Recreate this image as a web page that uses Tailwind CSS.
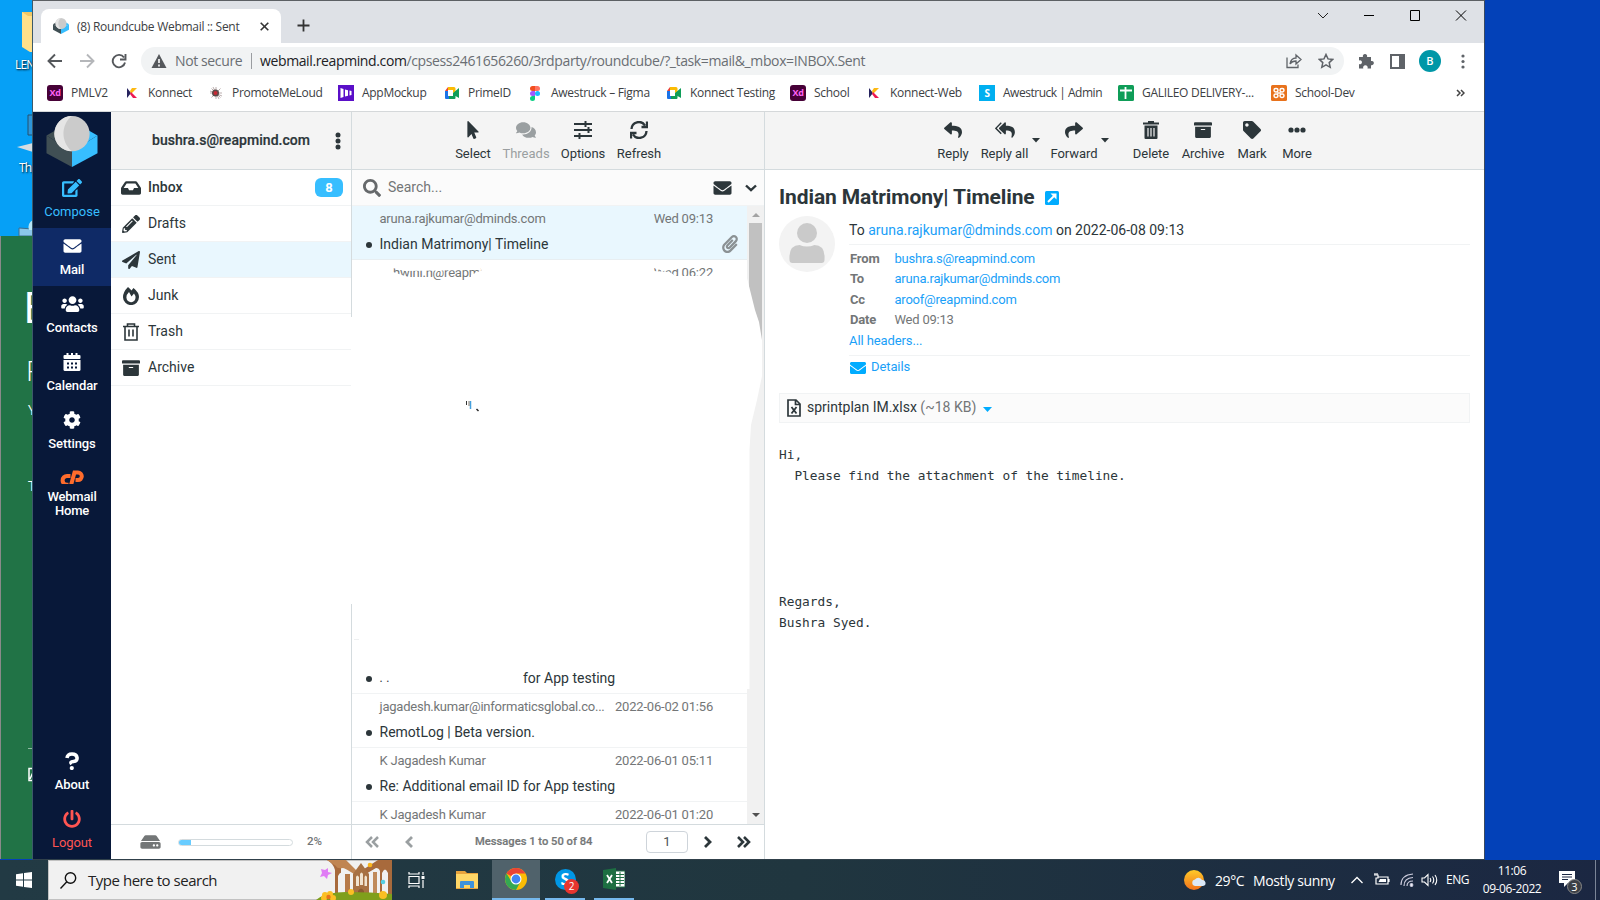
<!DOCTYPE html>
<html lang="en">
<head>
<meta charset="utf-8">
<title>Roundcube Webmail :: Sent</title>
<script src="https://cdn.jsdelivr.net/npm/@tailwindcss/browser@4"></script>
</head>
<body class="w-[1600px] h-[900px] overflow-hidden bg-[#0341b8] font-['Open_Sans',sans-serif] relative">
<svg class="hidden">
<symbol id="reply" viewBox="0 0 512 512"><path d="M8.309 189.836L184.313 37.851C199.719 24.546 224 35.347 224 56.015v80.053c160.629 1.839 288 34.032 288 186.258 0 61.441-39.581 122.309-83.333 154.132-13.653 9.931-33.111-2.533-28.077-18.631 45.344-145.012-21.507-183.51-176.59-185.742V360c0 20.7-24.3 31.453-39.687 18.164l-176.004-152c-11.071-9.562-11.086-26.753 0-36.328z"/></symbol>
<symbol id="replyall" viewBox="0 0 576 512"><g transform="translate(112 0) scale(.9 1)"><path d="M8.309 189.836L184.313 37.851C199.719 24.546 224 35.347 224 56.015v80.053c160.629 1.839 288 34.032 288 186.258 0 61.441-39.581 122.309-83.333 154.132-13.653 9.931-33.111-2.533-28.077-18.631 45.344-145.012-21.507-183.51-176.59-185.742V360c0 20.7-24.3 31.453-39.687 18.164l-176.004-152c-11.071-9.562-11.086-26.753 0-36.328z"/></g><path d="M180 50L24 208l156 158" fill="none" stroke="currentColor" stroke-width="42"/></symbol>
<symbol id="pointer" viewBox="0 0 320 512"><path d="M302.189 329.126H196.105l55.831 135.993c3.889 9.428-.555 19.999-9.444 23.999l-49.165 21.427c-9.165 4-19.443-.571-23.332-9.714l-53.053-129.136-86.664 89.138C18.729 472.71 0 463.554 0 447.977V18.299C0 1.899 19.921-6.096 30.277 5.443l284.412 292.542c11.472 11.179 3.007 31.141-12.5 31.141z"/></symbol>
<symbol id="envelope" viewBox="0 0 512 512"><path d="M502.3 190.8c3.9-3.1 9.7-.2 9.7 4.7V400c0 26.5-21.5 48-48 48H48c-26.5 0-48-21.5-48-48V195.6c0-5 5.7-7.8 9.7-4.7 22.4 17.4 52.1 39.5 154.1 113.6 21.1 15.4 56.7 47.8 92.2 47.6 35.7.3 72-32.8 92.3-47.6 102-74.1 131.6-96.3 154-113.7zM256 320c23.2.4 56.6-29.2 73.4-41.4 132.7-96.3 142.8-104.7 173.4-128.7 5.8-4.5 9.2-11.5 9.2-18.9v-19c0-26.5-21.5-48-48-48H48c-26.5 0-48 21.5-48 48v19c0 7.4 3.4 14.3 9.2 18.9 30.6 23.9 40.7 32.4 173.4 128.7 16.8 12.2 50.2 41.8 73.4 41.4z"/></symbol>
<symbol id="tag" viewBox="0 0 512 512"><path d="M0 252.118V48C0 21.49 21.49 0 48 0h204.118a48 48 0 0 1 33.941 14.059l211.882 211.882c18.745 18.745 18.745 49.137 0 67.882L293.823 497.941c-18.745 18.745-49.137 18.745-67.882 0L14.059 286.059A48 48 0 0 1 0 252.118zM112 64c-26.51 0-48 21.49-48 48s21.49 48 48 48 48-21.49 48-48-21.49-48-48-48z"/></symbol>
<symbol id="archive" viewBox="0 0 512 512"><path d="M32 448c0 17.7 14.3 32 32 32h384c17.7 0 32-14.3 32-32V160H32v288zm160-212c0-6.6 5.4-12 12-12h104c6.6 0 12 5.4 12 12v8c0 6.6-5.4 12-12 12H204c-6.6 0-12-5.4-12-12v-8zM480 32H32C14.3 32 0 46.3 0 64v48c0 8.800 7.200 16 16 16h480c8.800 0 16-7.200 16-16V64c0-17.700-14.300-32-32-32z"/></symbol>
<symbol id="search" viewBox="0 0 512 512"><path d="M505 442.7L405.3 343c-4.5-4.5-10.6-7-17-7H372c27.6-35.3 44-79.7 44-128C416 93.1 322.9 0 208 0S0 93.1 0 208s93.1 208 208 208c48.3 0 92.7-16.4 128-44v16.3c0 6.4 2.5 12.5 7 17l99.7 99.7c9.4 9.4 24.6 9.4 33.9 0l28.3-28.3c9.4-9.4 9.4-24.6.1-34zM208 336c-70.7 0-128-57.2-128-128 0-70.7 57.2-128 128-128 70.7 0 128 57.2 128 128 0 70.7-57.2 128-128 128z"/></symbol>
<symbol id="plane" viewBox="0 0 512 512"><path d="M476 3.2L12.5 270.6c-18.1 10.4-15.8 35.6 2.2 43.2L121 358.4l287.3-253.2c5.5-4.9 13.3 2.6 8.6 8.3L176 407v80.5c0 23.6 28.5 32.9 42.5 15.8L282 426l124.6 52.2c14.2 6 30.4-2.9 33-18.2l72-432C515 7.8 493.3-6.8 476 3.2z"/></symbol>
<symbol id="inbox" viewBox="0 0 576 512"><path d="M567.938 243.908L462.25 85.374A48.003 48.003 0 0 0 422.311 64H153.689a48 48 0 0 0-39.938 21.374L8.062 243.908A47.994 47.994 0 0 0 0 270.533V400c0 26.51 21.49 48 48 48h480c26.51 0 48-21.49 48-48V270.533a47.994 47.994 0 0 0-8.062-26.625zM162.252 128h251.497l85.333 128H376l-32 64H232l-32-64H76.918l85.334-128z"/></symbol>
<symbol id="pencil" viewBox="0 0 512 512"><path d="M497.9 142.1l-46.1 46.1c-4.7 4.7-12.3 4.7-17 0l-111-111c-4.7-4.7-4.7-12.3 0-17l46.1-46.1c18.7-18.7 49.1-18.7 67.9 0l60.1 60.1c18.8 18.7 18.8 49.1 0 67.9zM284.2 99.8L21.6 362.4.4 483.9c-2.9 16.4 11.4 30.6 27.8 27.8l121.5-21.3 262.6-262.6c4.7-4.7 4.7-12.3 0-17l-111-111c-4.8-4.7-12.4-4.7-17.1 0zM124.1 339.9c-5.5-5.5-5.5-14.3 0-19.8l154-154c5.5-5.5 14.3-5.5 19.8 0s5.5 14.3 0 19.8l-154 154c-5.5 5.5-14.3 5.5-19.8 0zM88 424h48v36.3l-64.5 11.3-31.1-31.1L51.7 376H88v48z"/></symbol>
<symbol id="edit" viewBox="0 0 576 512"><path d="M402.6 83.2l90.2 90.2c3.8 3.8 3.8 10 0 13.8L274.4 405.6l-92.8 10.3c-12.4 1.4-22.9-9.1-21.5-21.5l10.3-92.8L388.8 83.2c3.8-3.8 10-3.8 13.8 0zm162-22.900l-48.800-48.800c-15.200-15.200-39.900-15.200-55.200 0l-35.400 35.400c-3.800 3.800-3.800 10 0 13.800l90.200 90.200c3.800 3.800 10 3.800 13.800 0l35.400-35.400c15.200-15.300 15.200-40 0-55.200zM384 346.200V448H64V128h229.800c3.200 0 6.200-1.300 8.500-3.500l40-40c7.600-7.600 2.200-20.500-8.500-20.500H48C21.500 64 0 85.500 0 112v352c0 26.500 21.500 48 48 48h352c26.500 0 48-21.500 48-48V306.200c0-10.700-12.900-16-20.500-8.500l-40 40c-2.200 2.300-3.500 5.300-3.500 8.500z"/></symbol>
<symbol id="users" viewBox="0 0 640 512"><path d="M96 224c35.3 0 64-28.7 64-64s-28.7-64-64-64-64 28.7-64 64 28.7 64 64 64zm448 0c35.3 0 64-28.7 64-64s-28.7-64-64-64-64 28.7-64 64 28.7 64 64 64zm32 32h-64c-17.6 0-33.5 7.1-45.1 18.6 40.3 22.1 68.9 62 75.1 109.4h66c17.7 0 32-14.3 32-32v-32c0-35.3-28.7-64-64-64zm-256 0c61.9 0 112-50.1 112-112S381.9 32 320 32 208 82.1 208 144s50.1 112 112 112zm76.8 32h-8.3c-20.8 10-43.9 16-68.5 16s-47.6-6-68.5-16h-8.3C179.6 288 128 339.6 128 403.2V432c0 26.5 21.5 48 48 48h288c26.5 0 48-21.5 48-48v-28.800c0-63.600-51.600-115.200-115.200-115.200zm-223.700-13.400C161.500 263.100 145.600 256 128 256H64c-35.300 0-64 28.700-64 64v32c0 17.700 14.300 32 32 32h65.900c6.300-47.400 34.900-87.300 75.200-109.400z"/></symbol>
<symbol id="cog" viewBox="0 0 512 512"><path d="M487.4 315.7l-42.6-24.6c4.3-23.2 4.3-47 0-70.2l42.6-24.6c4.9-2.8 7.1-8.6 5.5-14-11.1-35.6-30-67.8-54.7-94.6-3.8-4.1-10-5.1-14.8-2.3L380.8 110c-17.900-15.400-38.500-27.300-60.800-35.100V25.800c0-5.600-3.900-10.500-9.400-11.700-36.700-8.200-74.300-7.800-109.200 0-5.500 1.200-9.400 6.100-9.400 11.700V75c-22.200 7.900-42.800 19.800-60.800 35.100L88.700 85.500c-4.900-2.800-11-1.900-14.800 2.300-24.700 26.700-43.600 58.900-54.700 94.600-1.700 5.400.6 11.200 5.500 14L67.300 221c-4.300 23.200-4.300 47 0 70.200l-42.600 24.600c-4.900 2.800-7.100 8.600-5.500 14 11.100 35.600 30 67.800 54.700 94.600 3.800 4.100 10 5.100 14.800 2.300l42.600-24.600c17.900 15.400 38.500 27.300 60.800 35.100v49.200c0 5.600 3.900 10.500 9.400 11.700 36.700 8.200 74.300 7.800 109.200 0 5.500-1.200 9.400-6.100 9.400-11.700v-49.200c22.200-7.900 42.800-19.800 60.800-35.100l42.600 24.600c4.900 2.800 11 1.900 14.800-2.300 24.700-26.700 43.600-58.900 54.700-94.600 1.500-5.500-.7-11.300-5.600-14.100zM256 336c-44.100 0-80-35.900-80-80s35.900-80 80-80 80 35.900 80 80-35.900 80-80 80z"/></symbol>
<symbol id="power" viewBox="0 0 512 512"><path d="M400 54.100c63 45 104 118.600 104 201.900 0 136.800-110.800 247.700-247.500 248C120 504.300 8.200 393 8 256.400 7.900 173.100 48.900 99.300 111.800 54.200c11.700-8.300 28-4.800 35 7.700L162.600 90c5.900 10.500 3.100 23.800-6.600 31-41.500 30.800-68 79.600-68 134.900-.1 92.300 74.500 168.100 168 168.100 91.600 0 168.600-74.200 168-169.100-.3-51.800-24.700-101.800-68.100-134-9.700-7.200-12.400-20.500-6.500-30.900l15.800-28.100c7-12.400 23.200-16.100 34.800-7.800zM296 264V24c0-13.300-10.700-24-24-24h-32c-13.300 0-24 10.700-24 24v240c0 13.300 10.700 24 24 24h32c13.300 0 24-10.700 24-24z"/></symbol>
<symbol id="clip" viewBox="0 0 448 512"><path d="M43.246 466.142c-58.43-60.289-57.341-157.511 1.386-217.581L254.392 34c44.316-45.332 116.351-45.336 160.671 0 43.89 44.894 43.943 117.329 0 162.276L232.214 383.128c-29.855 30.537-78.633 30.111-107.982-.998-28.275-29.97-27.368-77.473 1.452-106.953l143.743-146.835c6.182-6.314 16.312-6.422 22.626-.241l22.861 22.379c6.315 6.182 6.422 16.312.241 22.626L171.427 319.927c-4.932 5.045-5.236 13.428-.648 18.292 4.372 4.634 11.245 4.711 15.688.165l182.849-186.851c19.613-20.062 19.613-52.725-.011-72.798-19.189-19.627-49.957-19.637-69.154 0L90.39 293.295c-34.763 35.56-35.299 93.12-1.191 128.313 34.01 35.093 88.985 35.137 123.058.286l172.06-175.999c6.177-6.319 16.307-6.433 22.626-.256l22.877 22.364c6.319 6.177 6.434 16.307.256 22.626l-172.06 175.998c-59.576 60.938-155.943 60.216-214.77-.485z"/></symbol>
<symbol id="comments" viewBox="0 0 576 512"><path d="M416 192c0-88.4-93.1-160-208-160S0 103.6 0 192c0 34.3 14.1 65.9 38 92-13.4 30.2-35.5 54.2-35.8 54.5-2.200 2.300-2.800 5.700-1.500 8.700S4.800 352 8 352c36.600 0 66.900-12.300 88.700-25 32.200 15.700 70.300 25 111.300 25 114.900 0 208-71.600 208-160zm122 220c23.900-26 38-57.700 38-92 0-66.900-53.500-124.200-129.300-148.100.9 6.600 1.300 13.300 1.300 20.100 0 105.900-107.700 192-240 192-10.800 0-21.300-.8-31.700-1.900C207.800 439.600 281.800 480 368 480c41 0 79.100-9.200 111.300-25 21.800 12.700 52.100 25 88.700 25 3.200 0 6.100-1.900 7.300-4.800 1.300-2.900.7-6.300-1.500-8.700-.3-.3-22.400-24.200-35.800-54.500z"/></symbol>
<symbol id="hdd" viewBox="0 0 576 512"><path d="M576 304v96c0 26.51-21.49 48-48 48H48c-26.51 0-48-21.49-48-48v-96c0-26.51 21.49-48 48-48h480c26.51 0 48 21.49 48 48zm-48-80a79.557 79.557 0 0 1 30.777 6.165L462.25 85.374A48.003 48.003 0 0 0 422.311 64H153.689a48 48 0 0 0-39.938 21.374L17.223 230.165A79.557 79.557 0 0 1 48 224h480zm-48 96c-17.673 0-32 14.327-32 32s14.327 32 32 32 32-14.327 32-32-14.327-32-32-32zm-96 0c-17.673 0-32 14.327-32 32s14.327 32 32 32 32-14.327 32-32-14.327-32-32-32z"/></symbol>
<symbol id="cube" viewBox="0 0 52 52"><path d="M0 20L26 36V52L0 38z" fill="#404f54"/><path d="M52 20L26 36V52L52 38z" fill="#37beff"/><path d="M0 20L12 13 26 36z" fill="#404f54"/><path d="M40 13L52 20 26 36z" fill="#37beff"/><circle cx="26" cy="18" r="18" fill="#cbcbcb"/><path d="M26 0A18 18 0 0 0 26 36C14 26 15 8 26 0z" fill="#e5e5e5"/></symbol>
<symbol id="konnect" viewBox="0 0 16 16"><path d="M3 3l4 5-4 5z" fill="#26235e"/><path d="M8 3h5L7 9 6 6z" fill="#fdb913"/><path d="M7 7l6 6H9L6 9z" fill="#ed1651"/></symbol>
<symbol id="meet" viewBox="0 0 16 16"><path d="M1 6h3v5h6v3H2a1 1 0 0 1-1-1z" fill="#1a73e8"/><path d="M4 2v4H1z" fill="#ea4335"/><path d="M4 2h6a1.500 1.500 0 0 1 1.500 1.500V7L9 8V5H4z" fill="#fbbc04"/><path d="M9 8l6-5v10l-3.500-2v2a1 1 0 0 1-1 1H5v-3h4z" fill="#0f9d58"/></symbol>
</svg>

<!-- desktop behind the browser -->
<div class="absolute left-0 top-0 w-[33px] h-[236px] bg-[#06a0f6] overflow-hidden text-white text-[12px] leading-4">
  <svg class="absolute inset-0" width="33" height="236"><path d="M22 12h11v40h-3l-8-5z" fill="#ffe08a"/><path d="M22 12h10v4h-4z" fill="#f0c766"/><path d="M33 115h-5v20h5" fill="#2e95d8" stroke="#24506e"/><path d="M17 147l16-4v9z" fill="#d6dde2"/><path d="M33 229l-14-1v8h14z" fill="#8ac8ea" stroke="#3d6f90"/><path d="M33 220q-6 3-4 10h4z" fill="#b6e4f5"/></svg>
  <span class="absolute left-[15px] top-[57px] tracking-[-0.8px] [text-shadow:1px_1px_2px_#000]">LEN</span>
  <span class="absolute left-[19px] top-[160px] tracking-[-0.8px] [text-shadow:1px_1px_2px_#000]">Thi</span>
</div>
<div class="absolute left-0 top-[236px] w-[33px] h-[623px] bg-[#217346] border-l border-[#8a8a8a] overflow-hidden text-white">
  <span class="absolute left-[22px] top-[44px] text-[44px] leading-[52px]">E</span>
  <span class="absolute left-[25px] top-[116px] text-[28px] leading-[36px] font-light">F</span>
  <span class="absolute left-[27px] top-[164px] text-[14px] leading-[20px]">Y</span>
  <span class="absolute left-[27px] top-[240px] text-[14px] leading-[20px]">T</span>
  <svg class="absolute left-[26px] top-[510px]" width="8" height="36"><path d="M1 2.500h7" stroke="#8fb9a2"/><path d="M8 22.500H2v12h6M3 33l4-9" fill="none" stroke="#fff" stroke-width="1.500"/></svg>
</div>

<!-- browser window -->
<div class="absolute left-[32px] top-0 w-[1453px] h-[860px] flex flex-col bg-white border border-t-[#5c6064] border-l-[#3c5a6a] border-r-[#3a4a60] border-b-[#30404a] text-[#3c4043] overflow-hidden">
  <div class="h-[42px] bg-[#dee1e6] flex items-end shrink-0">
    <div class="ml-2 w-60 h-[34px] bg-white rounded-t-lg flex items-center pl-[12px] text-[12px]">
      <svg width="16" height="16"><use href="#cube"/></svg>
      <span class="ml-2 w-[163px] whitespace-nowrap tracking-[-0.28px] text-[#3c4043] pt-px">(8) Roundcube Webmail :: Sent</span>
      <svg class="ml-[20px]" width="9" height="9"><path d="M.7.7l7.600 7.600M8.300.7L.7 8.300" stroke="#333" stroke-width="1.600"/></svg>
    </div>
    <svg class="ml-4 mb-[11px]" width="13" height="13"><path d="M6.500.5v12M.5 6.500h12" stroke="#333" stroke-width="1.800"/></svg>
    <div class="flex-1 self-stretch flex justify-end items-start pt-[8px] pr-[17px] gap-[34px]">
      <svg width="12" height="13"><path d="M1 4l5 5 5-5" fill="none" stroke="#222"/></svg>
      <svg width="12" height="13"><path d="M1 6.500h10" stroke="#000"/></svg>
      <svg width="12" height="13"><path d="M1.500 1.500h9v10h-9z" fill="none" stroke="#000"/></svg>
      <svg width="12" height="13"><path d="M1 1.500l10 10M11 1.500l-10 10" stroke="#000"/></svg>
    </div>
  </div>
  <div class="h-9 flex items-center shrink-0 pl-[14px] text-[14px]">
    <svg class="w-[82px] h-4 shrink-0" fill="none" stroke-width="1.900"><path d="M15 8H2M8 1.500L1.500 8 8 14.500" stroke="#55585c"/><path d="M33 8h13M40 1.500L46.500 8 40 14.500" stroke="#b5b7ba"/><path d="M77 4.500A6.200 6.200 0 1 0 78 9.500M78.500 1v5.500h-5.500" stroke="#55585c"/></svg>
    <div class="ml-[12px] w-[1203px] h-7 rounded-full bg-[#f1f3f4] flex items-center pl-[10px] pr-[10px] pb-px whitespace-nowrap">
      <svg width="16" height="14"><path d="M8 0l7.500 14H.5z" fill="#55585c"/><path d="M8 5v4M8 10.500v2" stroke="#fff" stroke-width="1.600"/></svg>
      <span class="ml-2 w-[68px] text-[#6a6e73] tracking-[-0.38px]">Not secure</span>
      <span class="w-px h-4 bg-[#9a9da1] mx-2"></span>
      <span class="text-[#6a6e73] tracking-[-0.38px]"><span class="text-[#202124]">webmail.reapmind.com</span>/cpsess2461656260/3rdparty/roundcube/?_task=mail&amp;_mbox=INBOX.Sent</span>
      <span class="flex-1"></span>
      <svg width="16" height="16" fill="none" stroke="#5f6368" stroke-width="1.300"><path d="M1 4.500v10h11v-3M4 11q1-6 6-6V2l5 4.500L10 11V8q-4 0-6 3z"/></svg>
      <svg class="ml-4" width="16" height="16" fill="none" stroke="#5f6368" stroke-width="1.500"><path d="M8 1.500l2 4.400 4.700.5-3.500 3.200 1 4.700L8 11.900l-4.200 2.400 1-4.700L1.300 6.400 6 5.900z"/></svg>
    </div>
    <svg class="ml-[14px]" width="16" height="16" fill="#5f6368"><path d="M1 4h4a2.200 2.200 0 1 1 4 0h4v4a2.200 2.200 0 1 1 0 4.200V15.500H9.500a2.300 2.300 0 1 0-4.200 0H1V11a2 2 0 1 0 0-3.500z"/></svg>
    <svg class="ml-4" width="15" height="15"><path d="M1 1h13v13H1z" fill="none" stroke="#5f6368" stroke-width="2"/><path d="M9 1h5v13H9z" fill="#5f6368"/></svg>
    <span class="ml-[14px] size-[22px] rounded-full bg-[#0097a7] text-white text-[11px] font-semibold flex items-center justify-center">B</span>
    <svg class="ml-5" width="4" height="15" fill="#5f6368"><circle cx="2" cy="2" r="1.600"/><circle cx="2" cy="7.500" r="1.600"/><circle cx="2" cy="13" r="1.600"/></svg>
  </div>
  <div class="h-[33px] border-b border-[#d5d8da] flex items-center pl-[14px] text-[12px] tracking-[-0.29px] whitespace-nowrap shrink-0 pb-[4px] box-border">
    <div class="w-[77px] flex items-center gap-2"><span class="size-4 rounded-[3px] bg-[#470137] text-[#ff61f6] text-[9px] font-bold flex items-center justify-center">Xd</span>PMLV2</div>
    <div class="w-[84px] flex items-center gap-2"><svg width="16" height="16"><use href="#konnect"/></svg>Konnect</div>
    <div class="w-[130px] flex items-center gap-2"><svg width="16" height="16"><path d="M8 2v12M2 8h12M3.500 3.500l9 9M12.500 3.500l-9 9M5 2l6 12M2 6l12 5" stroke="#a99" stroke-width=".8"/><circle cx="7.500" cy="8" r="3.500" fill="#5a4a4a"/><circle cx="7.500" cy="8" r="2" fill="#c62a35"/></svg>PromoteMeLoud</div>
    <div class="w-[106px] flex items-center gap-2"><svg width="16" height="16"><path d="M0 0h16v16H0z" fill="#5a0fc8"/><path d="M2.500 3l3 1v8l-3 1zM7 4.500l3 .7v5.600l-3 .7zM11.500 5.500l2 .5v4l-2 .5z" fill="#fff"/></svg>AppMockup</div>
    <div class="w-[83px] flex items-center gap-2"><svg width="16" height="16"><use href="#meet"/></svg>PrimeID</div>
    <div class="w-[139px] flex items-center gap-2"><svg width="16" height="16"><path d="M5.500 1H8v5H5.500a2.500 2.500 0 0 1 0-5z" fill="#f24e1e"/><path d="M8 1h2.500a2.500 2.500 0 0 1 0 5H8z" fill="#ff7262"/><path d="M5.500 6H8v5H5.500a2.500 2.500 0 0 1 0-5z" fill="#a259ff"/><circle cx="10.500" cy="8.500" r="2.500" fill="#1abcfe"/><path d="M5.500 11H8v2.500A2.500 2.500 0 1 1 5.500 11z" fill="#0acf83"/></svg>Awestruck – Figma</div>
    <div class="w-[124px] flex items-center gap-2"><svg width="16" height="16"><use href="#meet"/></svg>Konnect Testing</div>
    <div class="w-[76px] flex items-center gap-2"><span class="size-4 rounded-[3px] bg-[#470137] text-[#ff61f6] text-[9px] font-bold flex items-center justify-center">Xd</span>School</div>
    <div class="w-[113px] flex items-center gap-2"><svg width="16" height="16"><use href="#konnect"/></svg>Konnect-Web</div>
    <div class="w-[139px] flex items-center gap-2 tracking-[-0.48px]"><span class="size-4 bg-[#00aff0] text-white text-[10px] font-bold flex items-center justify-center">S</span>Awestruck | Admin</div>
    <div class="w-[153px] flex items-center gap-2"><svg width="16" height="16"><rect width="16" height="16" rx="1.500" fill="#0f9d58"/><path d="M2 5.500h12M7.500 2v12" stroke="#fff" stroke-width="1.800"/></svg>GALILEO DELIVERY-...</div>
    <div class="w-[185px] flex items-center gap-2"><svg width="16" height="16"><rect width="16" height="16" rx="1.500" fill="#e8721c"/><g fill="none" stroke="#fff" stroke-width="1.500"><rect x="3" y="3.500" width="4" height="3.500" rx="1.700"/><rect x="9" y="3.500" width="4" height="3.500" rx="1.700"/><rect x="3" y="9" width="4" height="3.500" rx="1.700"/><rect x="9" y="9" width="4" height="3.500" rx="1.700"/><path d="M6 8h4"/></g></svg>School-Dev</div>
    <svg width="9" height="8" fill="none" stroke="#444" stroke-width="1.500"><path d="M1 1l3 3-3 3M5 1l3 3-3 3"/></svg>
  </div>

  <!-- webmail -->
  <div class="flex-1 flex min-h-0 font-[Roboto,sans-serif] text-[14px] text-[#2c363a] fill-[#2c363a]">
    <nav class="w-[78px] bg-[#081839] flex flex-col text-white text-[13px] font-medium text-center shrink-0 leading-[14px] tracking-[-0.1px]">
      <div class="h-[58px] flex justify-center pt-[4px]"><svg width="52" height="51"><use href="#cube"/></svg></div>
      <div class="h-[58px] flex flex-col items-center pt-[9px] gap-[8px] text-[#37beff] font-normal"><svg width="20" height="18" fill="currentColor"><use href="#edit"/></svg><span class="tracking-[0px]">Compose</span></div>
      <div class="h-[58px] flex flex-col items-center pt-[9px] gap-[8px] bg-[#0f2a66]"><svg width="19" height="18" fill="currentColor"><use href="#envelope"/></svg>Mail</div>
      <div class="h-[58px] flex flex-col items-center pt-[9px] gap-[8px]"><svg width="23" height="18" fill="currentColor"><use href="#users"/></svg>Contacts</div>
      <div class="h-[58px] flex flex-col items-center pt-[9px] gap-[8px]"><svg width="18" height="18"><path d="M3.500 0h2v3h-2zM12.500 0h2v3h-2zM8 0h2v3H8z" fill="#fff"/><rect x=".5" y="2" width="17" height="4" rx="1" fill="#fff"/><path d="M.5 7h17v9.500a1.500 1.500 0 0 1-1.500 1.500H2A1.500 1.500 0 0 1 .5 16.500z" fill="#fff"/><path d="M4 10.500h2M8 10.500h2M12 10.500h2M4 14.500h2M8 14.500h2M12 14.500h2" stroke="#081839" stroke-width="1.800"/></svg>Calendar</div>
      <div class="h-[58px] flex flex-col items-center pt-[9px] gap-[8px]"><svg width="18" height="18" fill="currentColor"><use href="#cog"/></svg>Settings</div>
      <div class="h-[58px] flex flex-col items-center pt-[10px] gap-[6px]"><svg width="24" height="17" fill="none" stroke="#ff6c2c" stroke-width="4"><path d="M10.500 6H7a4 4 0 0 0 0 8.800h1.500"/><path d="M10.500 17L14.500 2.500h3.500a3.700 3.700 0 0 1 0 7.600h-2.500"/></svg><span class="w-[60px] tracking-[-0.2px]">Webmail Home</span></div>
      <div class="flex-1"></div>
      <div class="h-[58px] flex flex-col items-center pt-[8px] gap-[8px]"><svg width="16" height="18" fill="none"><path d="M3 6Q3.500 2 8 2t5 3.500T9.500 9.500 7.800 12" stroke="#fff" stroke-width="3.600"/><circle cx="7.800" cy="16" r="2.100" fill="#fff"/></svg>About</div>
      <div class="h-[57px] flex flex-col items-center pt-[8px] gap-[8px] text-[#ff5552] font-normal"><svg width="18" height="18" fill="currentColor"><use href="#power"/></svg>Logout</div>
    </nav>

    <section class="w-[240px] flex flex-col shrink-0 bg-white">
      <header class="h-[58px] bg-[#f4f4f4] border-b border-[#d4dbde] flex items-center pl-[41px] font-medium text-[14px]"><span class="w-[158px] whitespace-nowrap tracking-[0.05px] [-webkit-text-stroke:0.2px]">bushra.s@reapmind.com</span><svg class="ml-[25px]" width="6" height="18" fill="#2c363a"><circle cx="3" cy="3" r="2.500"/><circle cx="3" cy="9" r="2.500"/><circle cx="3" cy="15" r="2.500"/></svg></header>
      <ul class="flex-1">
        <li class="h-9 border-b border-[#f1f3f4] flex items-center pl-[10px] font-medium"><svg width="20" height="18"><use href="#inbox"/></svg><span class="ml-[7px] flex-1">Inbox</span><span class="mr-2 w-7 h-[19px] rounded-md bg-[#37beff] text-white text-[13px] flex items-center justify-center font-bold">8</span></li>
        <li class="h-9 border-b border-[#f1f3f4] flex items-center pl-[11px]"><svg width="18" height="18"><use href="#pencil"/></svg><span class="ml-2">Drafts</span></li>
        <li class="h-9 border-b border-[#f1f3f4] flex items-center pl-[11px] bg-[#e9f7fe]"><svg width="18" height="18"><use href="#plane"/></svg><span class="ml-2">Sent</span></li>
        <li class="h-9 border-b border-[#f1f3f4] flex items-center pl-[11px]"><svg width="18" height="18"><path fill-rule="evenodd" d="M6 0q2 1.500 3.500 3.500L11.500 1Q17 5.500 17 10a8 8 0 0 1-16 .2Q1 5 6 0zM7 5q-3 3-2.500 6a4.500 4.500 0 0 0 9-.5q0-2-1.500-4l-2.500 3z" fill="#2c363a"/></svg><span class="ml-2">Junk</span></li>
        <li class="h-9 border-b border-[#f1f3f4] flex items-center pl-[11px]"><svg width="18" height="18" fill="none" stroke="#2c363a" stroke-width="1.600"><path d="M1 3.500h16M5.500 3.500V1h7v2.500M3 3.500v13.500h12V3.500M7 6.500v7M11 6.500v7"/></svg><span class="ml-2">Trash</span></li>
        <li class="h-9 border-b border-[#f1f3f4] flex items-center pl-[11px]"><svg width="18" height="18"><use href="#archive"/></svg><span class="ml-2">Archive</span></li>
      </ul>
      <footer class="h-[35px] border-t border-[#d4dbde] flex items-center pl-[29px] text-[11.500px] font-medium text-[#737677]"><svg width="21" height="18" fill="#737677"><use href="#hdd"/></svg><div class="ml-[17px] w-[115px] h-[7px] rounded-full border border-[#d4dbde] overflow-hidden"><div class="w-[12px] h-full bg-[#68ccff]"></div></div><span class="ml-[14px]">2%</span></footer>
    </section>

    <div class="w-px bg-[#d4dbde] flex flex-col shrink-0"><div class="mt-[205px] h-[287px] bg-white"></div></div>

    <section class="w-[412px] flex flex-col shrink-0 relative">
      <header class="h-[58px] bg-[#f4f4f4] border-b border-[#d4dbde] flex pl-[93px] text-[13px] leading-4 text-center">
        <div class="w-[56px] flex flex-col items-center pt-[9px] gap-[7px]"><svg width="18" height="18"><use href="#pointer"/></svg>Select</div>
        <div class="w-[50px] flex flex-col items-center pt-[9px] gap-[7px] text-[#9a9fa1]"><svg width="20" height="18" fill="currentColor"><use href="#comments"/></svg>Threads</div>
        <div class="w-[64px] flex flex-col items-center pt-[9px] gap-[7px] tracking-[-0.1px]"><svg width="18" height="18" stroke="#2c363a" stroke-width="2"><path d="M0 3h18M0 9h18M0 15h18M11.500 0v6M14.500 6v6M5.500 12v6"/></svg>Options</div>
        <div class="w-[48px] flex flex-col items-center pt-[9px] gap-[7px]"><svg width="18" height="18" fill="none" stroke="#2c363a" stroke-width="2.300"><path d="M1.500 8A7.300 7.300 0 0 1 15 4.500M16.500 10A7.300 7.300 0 0 1 3 13.500M17 .5V6h-5.500M1 17.500V12h5.500"/></svg>Refresh</div>
      </header>
      <div class="h-9 bg-[#fbfbfb] border-b border-[#f1f3f4] flex items-center pl-[11px] text-[#737677]"><svg width="18" height="18" fill="#66696b"><use href="#search"/></svg><span class="ml-[7px] flex-1">Search...</span><svg width="19" height="18"><use href="#envelope"/></svg><svg class="ml-[13px] mr-[7px]" width="12" height="8"><path d="M1 1.500L6 6.200 11 1.500" fill="none" stroke="#2c363a" stroke-width="2.400"/></svg></div>
      <div class="flex-1 flex min-h-0 overflow-hidden">
        <div class="w-[395px]">
          <div class="h-[54px] bg-[#e9f7fe] border-b border-[#e8eef1] pl-[27.500px] pr-[9px] pt-[2px]">
            <div class="h-[21px] flex items-center justify-between pr-[25px] text-[13px] tracking-[-0.2px] text-[#737677]"><span>aruna.rajkumar@dminds.com</span><span>Wed 09:13</span></div>
            <div class="h-[30px] flex items-center relative"><i class="absolute -left-[14px] top-[13px] size-[6px] rounded-full bg-[#2c363a]"></i><span class="flex-1">Indian Matrimony| Timeline</span><svg width="16" height="18" fill="#8b9194"><use href="#clip"/></svg></div>
          </div>
          <div class="ml-[41px] h-[20px] pr-[34px] flex justify-between text-[13px] leading-5 tracking-[-0.2px] text-[#737677] pt-[3px]"><span class="h-[18px] w-[89px] whitespace-nowrap [clip-path:polygon(0_5px,12px_8px,80px_7px,86px_4px,89px_7px,78px_12px,78px_18px,30px_18px,12px_13px,0_9px)]">hwini.h@reapmi</span><span class="h-[14px] [clip-path:polygon(0_5px,10px_8px,30px_5px,60px_5px,60px_13px,22px_13px,16px_9px,0_8px)]">Wed 06:22</span></div>
        </div>
        <div class="w-[17px] bg-[#f1f1f1] flex flex-col items-center">
          <svg class="mt-[6px]" width="8" height="6"><path d="M0 5l4-4 4 4z" fill="#a3a3a3"/></svg>
          <div class="mt-[5px] w-[13px] h-[135px] bg-[#c1c1c1]"></div>
          <div class="flex-1"></div>
          <svg class="mb-[6px]" width="8" height="6"><path d="M0 1h8l-4 4z" fill="#505050"/></svg>
        </div>
      </div>
      <!-- blanked-out area and the rows below it -->
      <svg class="absolute left-0 top-[166px]" width="412" height="418"><path d="M395 0L398 12 403 32 407 44 410 62V98L405 122 399 147 397.500 172V411H395z" fill="#fff"/><path d="M114.500 123v4" stroke="#333"/><path d="M118.500 123v8" stroke="#45a0dd" stroke-width="1.500"/><path d="M117 123v5" stroke="#654" stroke-width=".8"/><path d="M124.500 131l2 2" stroke="#222" stroke-width="1.500"/><path d="M2 361.500h5" stroke="#eef0f1"/></svg>
      <div class="absolute left-0 top-[546px] w-[395px] h-[166px] overflow-hidden">
        <div class="h-[36px] border-b border-[#f1f3f4] pl-[27.500px] flex items-center relative"><i class="absolute left-[13.500px] top-[18px] size-[6px] rounded-full bg-[#2c363a]"></i><span class="w-[143.500px] pt-[5px] text-[12px] tracking-[0.3px]">. .</span><span class="pt-[5px]">for App testing</span></div>
        <div class="h-[54px] border-b border-[#f1f3f4] pl-[27.500px] pr-[34px] pt-[2px]"><div class="h-[21px] flex items-center justify-between text-[13px] tracking-[-0.2px] whitespace-nowrap text-[#737677]"><span class="tracking-[-0.23px]">jagadesh.kumar@informaticsglobal.co...</span><span>2022-06-02 01:56</span></div><div class="h-[30px] flex items-center relative"><i class="absolute -left-[14px] top-[13px] size-[6px] rounded-full bg-[#2c363a]"></i>RemotLog | Beta version.</div></div>
        <div class="h-[54px] border-b border-[#f1f3f4] pl-[27.500px] pr-[34px] pt-[2px]"><div class="h-[21px] flex items-center justify-between text-[13px] tracking-[-0.2px] text-[#737677]"><span>K Jagadesh Kumar</span><span>2022-06-01 05:11</span></div><div class="h-[30px] flex items-center relative"><i class="absolute -left-[14px] top-[13px] size-[6px] rounded-full bg-[#2c363a]"></i>Re: Additional email ID for App testing</div></div>
        <div class="pl-[27.500px] pr-[34px] pt-[2px]"><div class="h-[21px] flex items-center justify-between text-[13px] tracking-[-0.2px] text-[#737677]"><span>K Jagadesh Kumar</span><span>2022-06-01 01:20</span></div></div>
      </div>
      <footer class="h-[35px] border-t border-[#d4dbde] flex items-center pl-[13px] text-[11.200px] font-medium text-[#737677]">
        <svg width="14" height="12" fill="none" stroke="#9a9fa1" stroke-width="2.500"><path d="M7 1L2 6l5 5M13 1L8 6l5 5"/></svg>
        <svg class="ml-[26px]" width="8" height="12" fill="none" stroke="#9a9fa1" stroke-width="2.800"><path d="M7 1L2 6l5 5"/></svg>
        <span class="ml-[62px] w-[118px] whitespace-nowrap [-webkit-text-stroke:0.2px]">Messages 1 to 50 of 84</span>
        <span class="ml-[53px] w-[42px] h-[22px] rounded border border-[#ced4da] bg-white flex items-center justify-center font-normal text-[#4a5155] text-[13px]">1</span>
        <svg class="ml-[15px]" width="9" height="12" fill="none" stroke="#2c363a" stroke-width="2.800"><path d="M2 1l5 5-5 5"/></svg>
        <svg class="ml-[24px]" width="15" height="12" fill="none" stroke="#2c363a" stroke-width="2.600"><path d="M2 1l5 5-5 5M8 1l5 5-5 5"/></svg>
      </footer>
    </section>

    <main class="flex-1 border-l border-[#d4dbde] flex flex-col min-w-0 bg-white">
      <header class="h-[58px] shrink-0 bg-[#f4f4f4] border-b border-[#d4dbde] flex pl-[164px] text-[13px] leading-4 text-center whitespace-nowrap tracking-[-0.05px]">
        <div class="w-[48px] flex flex-col items-center pt-[9px] gap-[7px]"><svg width="18" height="18"><use href="#reply"/></svg>Reply</div>
        <div class="w-[55px] flex flex-col items-center pt-[9px] gap-[7px]"><svg width="20" height="18" class="text-[#2c363a]"><use href="#replyall"/></svg>Reply all</div>
        <svg class="mt-[26px]" width="8" height="5"><path d="M0 0h8L4 4.500z" fill="#2c363a"/></svg>
        <div class="w-[68px] flex flex-col items-center pt-[9px] gap-[7px]"><svg class="-scale-x-100" width="18" height="18"><use href="#reply"/></svg>Forward</div>
        <svg class="-ml-[7px] mt-[26px]" width="8" height="5"><path d="M0 0h8L4 4.500z" fill="#2c363a"/></svg>
        <div class="ml-[15px] w-[54px] flex flex-col items-center pt-[9px] gap-[7px]"><svg width="18" height="18"><path d="M1 1.500h5V0h6v1.500h5v2H1z" fill="#2c363a"/><path d="M2.500 4.500h13V17a1 1 0 0 1-1 1h-11a1 1 0 0 1-1-1z" fill="#2c363a"/><path d="M6 7v8.500M9 7v8.500M12 7v8.500" stroke="#f4f4f4" stroke-width="1.200"/></svg>Delete</div>
        <div class="w-[50px] flex flex-col items-center pt-[9px] gap-[7px]"><svg width="18" height="18"><use href="#archive"/></svg>Archive</div>
        <div class="w-[48px] flex flex-col items-center pt-[9px] gap-[7px]"><svg width="18" height="18"><use href="#tag"/></svg>Mark</div>
        <div class="w-[42px] flex flex-col items-center pt-[9px] gap-[7px]"><svg width="18" height="18" fill="#2c363a"><circle cx="3" cy="9" r="2.600"/><circle cx="9" cy="9" r="2.600"/><circle cx="15" cy="9" r="2.600"/></svg>More</div>
      </header>
      <article class="flex-1 px-[14px] pt-[13px] flex flex-col">
        <h1 class="h-[28px] flex items-center text-[21px] font-bold whitespace-nowrap"><span class="w-[258px] pt-px tracking-[-0.1px]">Indian Matrimony| Timeline</span><svg class="ml-2 mt-[2px]" width="14" height="14"><rect width="14" height="14" rx="1.500" fill="#00acff"/><path d="M3 11l6.500-6.500" stroke="#fff" stroke-width="2"/><path d="M5.500 2.500h6v6z" fill="#fff"/></svg></h1>
        <div class="flex mt-[5px]">
          <svg class="shrink-0" width="56" height="56"><circle cx="28" cy="28" r="28" fill="#f3f3f3"/><circle cx="28" cy="17" r="10" fill="#cacaca"/><path d="M10.500 44q-1-15 10-15 7.500 3 15 0 11 0 10 15 0 3-3 3h-29q-3 0-3-3z" fill="#cacaca"/></svg>
          <div class="ml-[14px] flex-1">
            <div class="h-[29px] border-b border-[#f1f3f4] flex items-center whitespace-pre text-[14px]">To <span class="text-[#1a9ff8]">aruna.rajkumar@dminds.com</span> on 2022-06-08 09:13</div>
            <div class="grid grid-cols-[44.500px_1fr] auto-rows-[20.500px] items-center text-[13px] tracking-[-0.22px] text-[#1a9ff8] pt-[3px] pb-px pl-px">
              <b class="font-bold text-[#737677] tracking-[-0.1px]">From</b><span>bushra.s@reapmind.com</span>
              <b class="font-bold text-[#737677]">To</b><span>aruna.rajkumar@dminds.com</span>
              <b class="font-bold text-[#737677]">Cc</b><span>aroof@reapmind.com</span>
              <b class="font-bold text-[#737677]">Date</b><span class="text-[#737677]">Wed 09:13</span>
            </div>
            <div class="h-[25px] border-b border-[#f1f3f4] text-[13px] leading-[20px] tracking-[-0.1px] text-[#1a9ff8]">All headers...</div>
            <div class="flex text-[13px] leading-[22px] text-[#1a9ff8] pl-px tracking-[-0.1px]"><svg class="mt-[4px] mr-[5px]" width="16" height="16" fill="#00acff"><use href="#envelope"/></svg>Details</div>
          </div>
        </div>
        <div class="mt-[15px] h-[30px] border border-[#f1f3f4] bg-[#fbfbfb] flex items-center pl-[7px] whitespace-pre"><svg width="14" height="18" fill="none" stroke="#2c363a" stroke-width="1.700"><path d="M1 1h8l4 4v12H1zM8.500 1v4.500H13"/><path d="M4.500 8l5 6.500M9.500 8l-5 6.500" stroke-width="1.800"/></svg><span class="ml-[6px] pb-px">sprintplan IM.xlsx <span class="text-[#737677]">(~18 KB)</span></span><svg class="ml-[7px] mt-[2px]" width="9" height="5"><path d="M0 0h9L4.500 5z" fill="#00acff"/></svg></div>
        <pre class="mt-[21px] font-['DejaVu_Sans_Mono',monospace] text-[12.800px] leading-[21px]">Hi,
  Please find the attachment of the timeline.





Regards,
Bushra Syed.</pre>
      </article>
    </main>
  </div>
</div>

<!-- taskbar -->
<div class="absolute left-0 top-[860px] w-[1600px] h-[40px] flex items-center text-white bg-linear-to-r from-[#223a44] via-[#20363f] to-[#1b2742]">
  <svg class="ml-4 shrink-0" width="16" height="16" fill="#fff"><path d="M0 2.300l7-1v6.200H0zM8 1.100L16 0v7.500H8zM0 8.500h7v6.200l-7-1zM8 8.500h8V16l-8-1.100z"/></svg>
  <div class="ml-4 w-[344px] h-[40px] bg-[#f1f1f1] border border-[#c2c2c2] border-r-0 flex items-center pl-[11px] text-[#222] text-[15px] shrink-0">
    <svg width="17" height="17" fill="none" stroke="#111" stroke-width="1.400"><circle cx="10.500" cy="6" r="5.200"/><path d="M6.800 9.800L.5 16.500"/></svg>
    <span class="ml-[11px] flex-1 whitespace-nowrap tracking-[-0.47px]">Type here to search</span>
    <svg width="76" height="40"><path d="M5 9l4 1 3-2v4l4 1-4 2-1 4-3-3-4 1 2-4z" fill="#e07cf5"/><path d="M11 0H25V38H19V10Q17 3 11 0z" fill="#a86a3c"/><path d="M11 0H30L41 11v5q-12-8-14-8-6 1-7-2z" fill="#c08552"/><path d="M76 0H62L48 9v6l12-7q3 0 4 3v27h12z" fill="#a86a3c"/><path d="M22 36V16q3-7 7 0v20z" fill="#f1f1f1"/><path d="M29 36V14h5v22z" fill="#b67a49"/><path d="M66 34V13q3-7 6 0v21z" fill="#f1f1f1"/><path d="M57 34V12h4v22z" fill="#c08a5a"/><path d="M37 36V14L45 3l8 11v22z" fill="#a87143"/><path d="M40 26V17q1-3 3 0v9zM44 25V14q1.500-3 3 0v11zM48.500 26V17q1-3 2.500 0v9z" fill="#f1e3cf"/><path d="M42 38V31q3-5 6 0v7z" fill="#8a5a30"/><path d="M0 40q10-8 30-8 25 0 46 2v6z" fill="#7f9f1b"/><circle cx="54" cy="5" r="2.300" fill="#f9b51c"/><circle cx="67" cy="22" r="2.300" fill="#55cfe4"/><g fill="#fbbf24"><circle cx="9" cy="35" r="3"/><circle cx="14" cy="34" r="3"/><circle cx="17" cy="38" r="3"/><circle cx="8" cy="38" r="3"/><circle cx="35" cy="32" r="3"/><circle cx="67" cy="35" r="4"/></g><circle cx="12.500" cy="37" r="2.200" fill="#e8721c"/></svg>
  </div>
  <svg class="ml-[16px] shrink-0" width="18" height="16" fill="none" stroke="#fff" stroke-width="1.200"><path d="M1 4.500h10v7H1zM1 0v2h10V0M1 16v-2h10v2M15 0v3M15 8v8"/><path d="M13.500 4h3v3h-3z" fill="#fff" stroke="none"/></svg>
  <svg class="ml-[30px] shrink-0" width="22" height="20"><path d="M0 1h9l2 2h11v16H0z" fill="#e8a33d"/><path d="M0 4h22v14H0z" fill="#ffd767"/><path d="M4 18v-6q0-1 1-1h12q1 0 1 1v6h-4v-3H8v3z" fill="#3e92dc"/></svg>
  <div class="ml-[14px] w-12 h-full bg-[#50626b] border-b-2 border-[#76b9ed] flex items-center justify-center shrink-0"><svg width="22" height="22" viewBox="-11 -11 22 22"><circle r="11" fill="#fbbc04"/><path d="M0 0L-9.500-5.500A11 11 0 0 1 9.500-5.500H0z" fill="#ea4335"/><path d="M-9.500-5.500A11 11 0 0 0 0 11L4.500 2.500-4.500 2.500z" fill="#34a853"/><circle r="5.500" fill="#fff"/><circle r="4.400" fill="#4285f4"/></svg></div>
  <div class="ml-[5px] w-10 h-full border-b-2 border-[#76b9ed] flex items-center justify-center relative shrink-0 text-[16px] font-bold"><span class="size-[21px] rounded-full bg-[#0097e6] flex items-center justify-center leading-none">S</span><span class="absolute left-[19px] top-[19px] size-[15px] rounded-full bg-[#e8352e] text-[10px] font-normal flex items-center justify-center">2</span></div>
  <div class="ml-[9px] w-10 h-full border-b-2 border-[#76b9ed] flex items-center justify-center shrink-0"><svg width="22" height="22"><path d="M12 3h10v16H12z" fill="#fff" stroke="#1d6f42"/><path d="M13 6.500h8M13 9.500h8M13 12.500h8M13 15.500h8M17 4v14" stroke="#1d6f42"/><path d="M0 2l13-2v22L0 20z" fill="#1d6f42"/><path d="M4 7l5 8M9 7l-5 8" stroke="#fff" stroke-width="1.800"/></svg></div>
  <div class="flex-1"></div>
  <svg class="shrink-0" width="22" height="20"><defs><linearGradient id="sun" x2="0" y2="1"><stop stop-color="#ffca28"/><stop offset="1" stop-color="#f2711c"/></linearGradient></defs><circle cx="10" cy="10" r="10" fill="url(#sun)"/><path d="M11 16a3.300 3.300 0 0 1 0-6.500 4 4 0 0 1 7 .5 3 3 0 0 1 1 6z" fill="#dce9f8"/></svg>
  <span class="ml-[9px] w-[29px] text-[14px] tracking-[-0.4px] whitespace-nowrap">29°C</span>
  <span class="ml-[9px] w-[82px] text-[14px] tracking-[-0.38px] whitespace-nowrap">Mostly sunny</span>
  <svg class="ml-[15px] shrink-0" width="14" height="8"><path d="M1.500 7L7 1.500 12.500 7" fill="none" stroke="#fff" stroke-width="1.300"/></svg>
  <svg class="ml-[9px] shrink-0" width="17" height="14" fill="none" stroke="#fff" stroke-width="1.200"><path d="M5 4h10v7H3V8M1 2h4v3H3v3M2 0v2M4 0v2M16 6v3"/><path d="M7 6h6v3H5.500z" fill="#fff" stroke="none"/></svg>
  <svg class="ml-[10px] shrink-0" width="14" height="14" fill="none" stroke="#ccd" stroke-width="1.200"><path d="M1 12Q1 2 13 1M4 13Q4 5 13 4.500M7 13q0-5 6-5"/><circle cx="11.500" cy="12" r="1.300" fill="#fff"/></svg>
  <svg class="ml-[7px] shrink-0" width="17" height="14" fill="none" stroke="#fff" stroke-width="1.100"><path d="M1 5h2.500L7 1.500v11L3.500 9H1zM9 5q1.500 2 0 4M11.500 3.500q2.500 3.500 0 7M14 2q3.500 5 0 10"/></svg>
  <span class="ml-[8px] w-[24px] text-[12px] tracking-[-0.5px]">ENG</span>
  <div class="ml-[12px] w-[60px] text-[12px] leading-[18px] text-center tracking-[-0.4px] whitespace-nowrap"><div>11:06</div><div>09-06-2022</div></div>
  <div class="ml-[17px] w-[24px] h-6 relative shrink-0"><svg class="mt-[3px]" width="17" height="16"><path d="M0 0h16v12H9l-4 4v-4H0z" fill="#fff"/><path d="M3 3.500h10M3 6h10M3 8.500h6" stroke="#1b2742"/></svg><span class="absolute left-[8px] top-[11px] size-[15px] rounded-full bg-[#3b3f46] border border-[#888] text-[11px] flex items-center justify-center leading-none">3</span></div>
  <div class="ml-[12px] mr-1 w-px h-full bg-[#7b8597] shrink-0"></div>
</div>
</body>
</html>
